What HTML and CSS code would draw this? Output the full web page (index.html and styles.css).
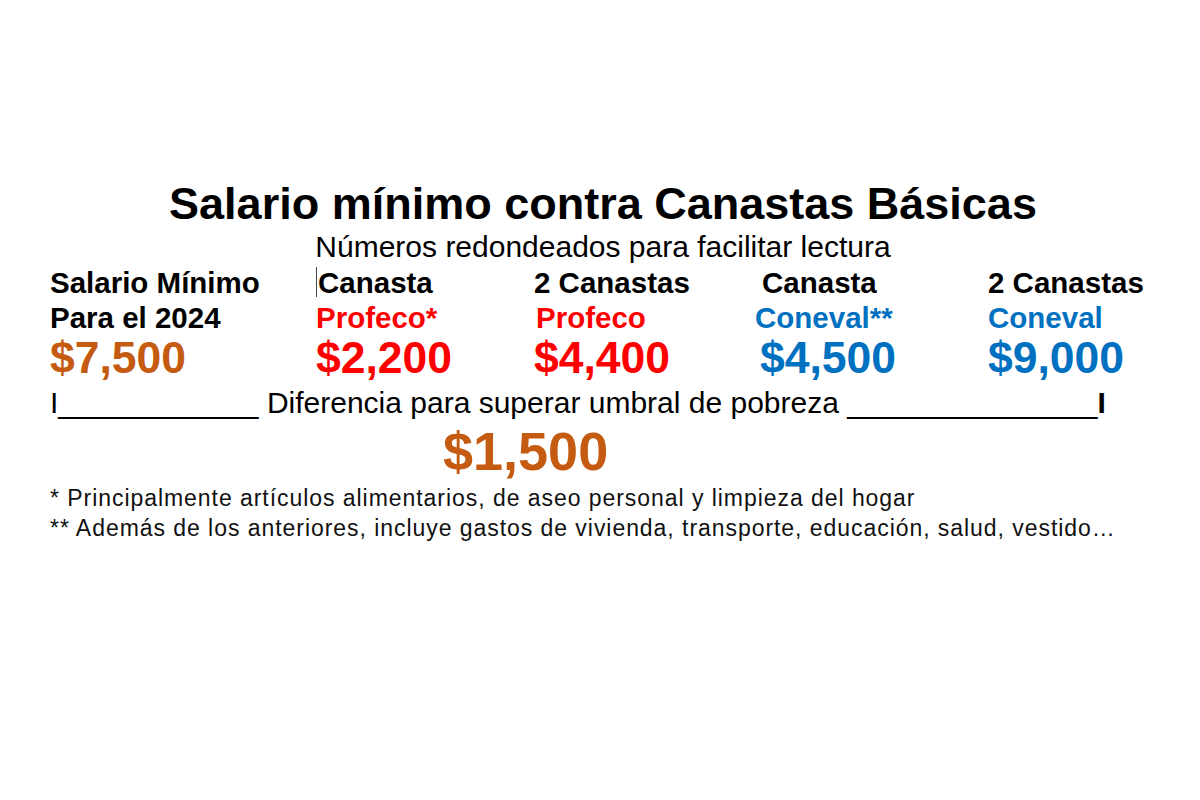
FILE: index.html
```html
<!DOCTYPE html>
<html lang="es">
<head>
    <meta charset="UTF-8">
    <meta name="viewport" content="width=device-width, initial-scale=1.0">
    <title>Salario mínimo contra Canastas Básicas</title>
    <link rel="stylesheet" href="styles.css">
</head>
<body>
    <div id="slide">
        <h1 class="title">Salario mínimo contra Canastas Básicas</h1>
        <p class="subtitle">Números redondeados para facilitar lectura</p>

        <div class="columns">
            <div class="col">
                <div class="label">Salario Mínimo</div>
                <div class="label">Para el 2024</div>
                <div class="price orange">$7,500</div>
            </div>
            <div class="col">
                <div class="label"><span class="caret"></span>Canasta</div>
                <div class="label red">Profeco*</div>
                <div class="price red">$2,200</div>
            </div>
            <div class="col">
                <div class="label">2 Canastas</div>
                <div class="label red nudge">Profeco</div>
                <div class="price red">$4,400</div>
            </div>
            <div class="col">
                <div class="label indent">Canasta</div>
                <div class="label blue">Coneval**</div>
                <div class="price blue indent-sm">$4,500</div>
            </div>
            <div class="col">
                <div class="label">2 Canastas</div>
                <div class="label blue">Coneval</div>
                <div class="price blue">$9,000</div>
            </div>
        </div>

        <div class="gap-row">I____________ Diferencia para superar umbral de pobreza _______________<b>I</b></div>
        <div class="diff orange">$1,500</div>

        <div class="notes">
            <p>* Principalmente artículos alimentarios, de aseo personal y limpieza del hogar</p>
            <p>** Además de los anteriores, incluye gastos de vivienda, transporte, educación, salud, vestido…</p>
        </div>
    </div>
</body>
</html>
```

FILE: styles.css
```css
body {
    font-family: "Liberation Sans", Arial, sans-serif;
    background-color: #fff;
    color: #000;
    margin: 0;
    padding: 0;
}

#slide {
    width: 1200px;
    height: 800px;
    padding: 179px 0 0 50px;
    box-sizing: border-box;
}

.title {
    font-size: 45px;
    line-height: 50px;
    font-weight: bold;
    margin: 0;
    padding-right: 44px;
    text-align: center;
}

.subtitle {
    font-size: 30px;
    line-height: 36px;
    margin: 0;
    padding-right: 44px;
    text-align: center;
}

.columns {
    display: grid;
    grid-template-columns: 266px 218px 221px 233px 1fr;
}

.label {
    font-size: 29.5px;
    line-height: 35px;
    font-weight: bold;
    white-space: nowrap;
}

.price {
    font-size: 44.5px;
    line-height: 46px;
    font-weight: bold;
}

.caret {
    display: inline-block;
    width: 1px;
    height: 30px;
    margin-right: 1px;
    vertical-align: -4px;
    background-color: #444;
}

.nudge {
    padding-left: 2px;
}

.indent {
    padding-left: 7px;
}

.indent-sm {
    padding-left: 5px;
}

.orange {
    color: #c55a11;
}

.red {
    color: #ff0000;
}

.blue {
    color: #0070c0;
}

.gap-row {
    margin-top: 5px;
    font-size: 30px;
    line-height: 34px;
    white-space: nowrap;
}

.gap-row b {
    font-weight: bold;
}

.diff {
    margin: 3px 0 0 393px;
    font-size: 54px;
    line-height: 56px;
    font-weight: bold;
}

.notes {
    margin-top: 4px;
    font-size: 23px;
    line-height: 30px;
    letter-spacing: 0.95px;
    color: #111;
}

.notes p {
    margin: 0;
    white-space: nowrap;
}
```
